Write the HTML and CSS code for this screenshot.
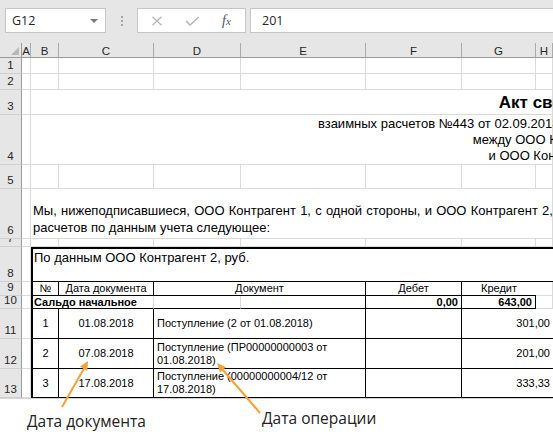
FILE: index.html
```html
<!DOCTYPE html>
<html lang="ru">
<head>
<meta charset="utf-8">
<link rel="stylesheet" href="styles.css">
</head>
<body>
<div class="page">
  <div class="topbar">
    <div class="namebox"><span>G12</span><span class="dd"></span></div>
    <div class="grip"><i></i><i></i><i></i></div>
    <div class="fxbox">
      <svg class="ico" width="12" height="10" viewBox="0 0 12 10"><path d="M1.5 0.8 L10.5 9.2 M10.5 0.8 L1.5 9.2" stroke="#b4b4b4" stroke-width="1.2" fill="none"/></svg>
      <svg class="ico" width="15" height="10" viewBox="0 0 15 10"><path d="M1 5 L5 9 L14 1" stroke="#b4b4b4" stroke-width="1.5" fill="none"/></svg>
      <span class="fx"><i>f</i><i class="fxx">x</i></span>
    </div>
    <div class="finput">201</div>
  </div>

  <div class="sheet">
    <div class="corner"><span class="tri"></span></div>
    <div class="ch">A</div><div class="ch">B</div><div class="ch">C</div><div class="ch">D</div><div class="ch">E</div><div class="ch">F</div><div class="ch">G</div><div class="ch">H</div>

    <div class="rh">1</div><div class="c"></div><div class="c"></div><div class="c"></div><div class="c"></div><div class="c"></div><div class="c"></div><div class="c"></div><div class="c"></div>
    <div class="rh">2</div><div class="c"></div><div class="c"></div><div class="c"></div><div class="c"></div><div class="c"></div><div class="c"></div><div class="c"></div><div class="c"></div>

    <div class="rh">3</div><div class="c"></div>
    <div class="c span7 title"><div class="wide wt">Акт сверки</div></div>

    <div class="rh">4</div><div class="c"></div>
    <div class="c span7 sub"><div class="wide ws">
      <div class="sl1">взаимных расчетов №443 от 02.09.2018 за период: 01.08.2018 - 31.08.2018</div>
      <div>между ООО Контрагент 1</div>
      <div>и ООО Контрагент 2</div>
    </div></div>

    <div class="rh">5</div><div class="c"></div><div class="c"></div><div class="c"></div><div class="c"></div><div class="c"></div><div class="c"></div><div class="c"></div><div class="c"></div>

    <div class="rh">6</div><div class="c"></div>
    <div class="c span7 para">
      <div class="l1">Мы, нижеподписавшиеся, ООО Контрагент 1, с одной стороны, и ООО Контрагент 2, с другой стороны, составили настоящий акт</div>
      <div>расчетов по данным учета следующее:</div>
    </div>

    <div class="rh r7">7</div><div class="c"></div><div class="c"></div><div class="c"></div><div class="c"></div><div class="c"></div><div class="c"></div><div class="c"></div><div class="c"></div>

    <div class="rh">8</div><div class="c"></div>
    <div class="span7 box">По данным ООО Контрагент 2, руб.</div>

    <div class="rh">9</div><div class="c"></div>
    <div class="t tl cen">№</div>
    <div class="t cen">Дата документа</div>
    <div class="t span2 cen">Документ</div>
    <div class="t cen">Дебет</div>
    <div class="t cen nor">Кредит</div>
    <div class="c"></div>

    <div class="rh">10</div><div class="c"></div>
    <div class="t tl b over nor">Сальдо начальное</div>
    <div class="t lg"></div>
    <div class="t lg"></div>
    <div class="t"></div>
    <div class="t b num">0,00</div>
    <div class="t b num">643,00</div>
    <div class="c"></div>

    <div class="rh">11</div><div class="c"></div>
    <div class="t tl cen mid">1</div>
    <div class="t cen mid">01.08.2018</div>
    <div class="t span2 doc">Поступление (2 от 01.08.2018)</div>
    <div class="t"></div>
    <div class="t span2 num mid nor">301,00</div>

    <div class="rh">12</div><div class="c"></div>
    <div class="t tl cen mid">2</div>
    <div class="t cen mid">07.08.2018</div>
    <div class="t span2 doc">Поступление (ПР00000000003 от 01.08.2018)</div>
    <div class="t"></div>
    <div class="t span2 num mid nor">201,00</div>

    <div class="rh">13</div><div class="c"></div>
    <div class="t tl cen mid">3</div>
    <div class="t cen mid">17.08.2018</div>
    <div class="t span2 doc">Поступление (00000000004/12 от 17.08.2018)</div>
    <div class="t"></div>
    <div class="t span2 num mid nor">333,33</div>
  </div>

  <div class="notes">
    <span class="note n1">Дата документа</span>
    <span class="note n2">Дата операции</span>
  </div>

  <svg class="arrows" width="553" height="435" viewBox="0 0 553 435">
    <line x1="62" y1="407" x2="84" y2="368.5" stroke="#f5a133" stroke-width="2"/>
    <polygon points="88,361 87.3,371 80,366.6" fill="#f5a133"/>
    <line x1="260" y1="413" x2="222.5" y2="369.5" stroke="#f5a133" stroke-width="2"/>
    <polygon points="217,363 226,367.2 220,372.4" fill="#f5a133"/>
  </svg>
</div>
</body>
</html>
```

FILE: styles.css
```css
* { box-sizing: border-box; margin: 0; padding: 0; }
html, body { width: 553px; height: 435px; overflow: hidden; background: #fff; }
body { font-family: "Liberation Sans", Arial, sans-serif; color: #000; }
.page { position: relative; width: 553px; height: 435px; overflow: hidden; }

/* formula bar */
.topbar { height: 43px; background: #e6e6e6; display: flex; align-items: flex-start; padding: 8px 0 0 5px; }
.namebox { width: 101px; height: 25px; background: #fff; border: 1px solid #c6c6c6; display: flex; align-items: center; justify-content: space-between; padding: 0 7px 0 6px; font-family: "Open Sans", sans-serif; font-size: 12.5px; color: #262626; }
.dd { width: 0; height: 0; border-left: 4px solid transparent; border-right: 4px solid transparent; border-top: 4px solid #7a7a7a; }
.grip { width: 31px; height: 25px; display: flex; flex-direction: column; align-items: center; justify-content: center; gap: 2px; }
.grip i { display: block; width: 2px; height: 2px; background: #a6a6a6; }
.fxbox { width: 109px; height: 25px; background: #fff; border: 1px solid #c6c6c6; display: flex; align-items: center; padding-left: 13px; }
.fxbox .ico:first-child { margin-right: 22px; }
.fxbox .ico:nth-child(2) { margin-right: 22px; }
.fx { font-family: "Liberation Serif", serif; font-size: 14px; color: #555; }
.fx .fxx { font-size: 11px; }
.finput { flex: 1; height: 25px; margin-left: 4px; background: #fff; border: 1px solid #c6c6c6; border-right: none; display: flex; align-items: center; padding-left: 11px; font-family: "Open Sans", sans-serif; font-size: 12.5px; color: #262626; }

/* sheet grid */
.sheet { display: grid; grid-template-columns: 22px 9px 28px 95px 87px 125px 96px 74px 17px; grid-template-rows: 15px 16px 16px 25px 50px 24px 50px 8px 35px 14px 13px 30px 30px 29px; font-size: 11px; border-bottom: 1px solid #d4d4d4; height: 356px; }
.corner { background: #e6e6e6; border-right: 1px solid #9b9b9b; border-bottom: 1px solid #9b9b9b; position: relative; }
.tri { position: absolute; right: 2px; bottom: 2px; width: 0; height: 0; border-left: 8px solid transparent; border-bottom: 8px solid #b8b8b8; }
.ch { background: #e6e6e6; border-right: 1px solid #ababab; border-bottom: 1px solid #9b9b9b; display: flex; align-items: center; justify-content: center; font-size: 11.5px; color: #262626; overflow: hidden; padding-top: 1px; }
.rh { background: #e6e6e6; border-right: 1px solid #9b9b9b; border-bottom: 1px solid #d0d0d0; display: flex; align-items: flex-end; justify-content: center; font-size: 11.5px; color: #262626; overflow: hidden; line-height: 13px; padding-bottom: 1px; }
.c { border-right: 1px solid #dadada; border-bottom: 1px solid #dadada; min-width: 0; }
.span7 { grid-column: span 7; }
.span2 { grid-column: span 2; }
.wide { flex-shrink: 0; text-align: center; white-space: nowrap; }
.wt { width: 1028px; }
.ws { width: 1038px; }
.ws .sl1 { padding-right: 10px; }
.title { display: flex; align-items: flex-end; font-size: 17px; font-weight: bold; line-height: 19px; padding-bottom: 2px; }
.sub { font-size: 13px; line-height: 16px; padding-top: 1px; }
.para { font-size: 13px; line-height: 17px; display: flex; flex-direction: column; justify-content: flex-end; padding: 0 0 2px 2px; white-space: nowrap; }
.para .l1 { word-spacing: 0.6px; }
.box { border-top: 2px solid #000; border-left: 2px solid #000; border-bottom: 1px solid #000; font-size: 13px; line-height: 16px; padding: 1px 0 0 1px; white-space: nowrap; }

/* table */
.t { border-right: 1px solid #000; border-bottom: 1px solid #000; display: flex; align-items: center; padding: 0 3px; line-height: 13px; white-space: nowrap; min-width: 0; }
.tl { border-left: 2px solid #000; }
.cen { justify-content: center; }
.b { font-weight: bold; }
.over { border-right: none; overflow: visible; padding-left: 1px; }
.lg { border-right: 1px solid #dadada; }
.nor { border-right: none; }
.num { justify-content: flex-end; }
.doc { white-space: normal; padding-left: 3px; }
.t.b.num:last-of-type { border-right: 1px solid #000; }

/* notes */
.notes { display: flex; align-items: flex-start; height: 38px; padding: 8px 0 0 27px; font-family: "Open Sans", sans-serif; font-size: 15.5px; color: #222; }
.n1 { width: 235px; padding-top: 3px; }
.n2 { padding-top: 0; }
.arrows { position: absolute; left: 0; top: 0; pointer-events: none; }
```
